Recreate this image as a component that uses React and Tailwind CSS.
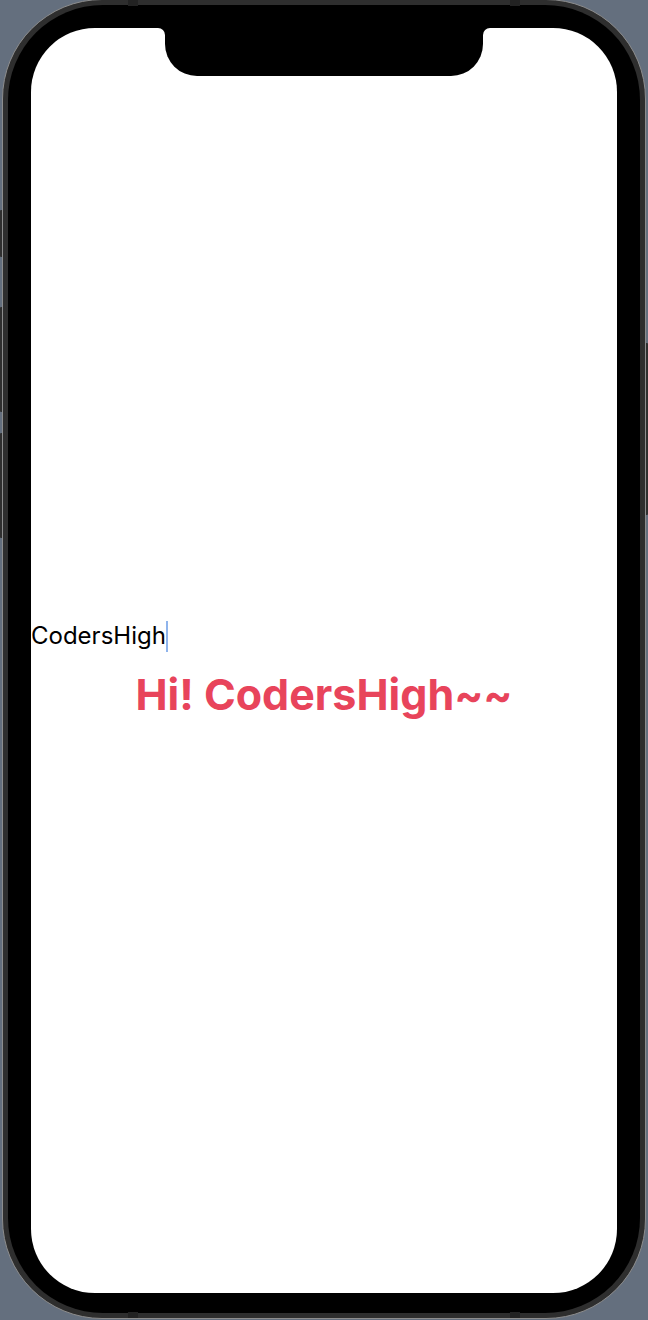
export default function App() {
  return (
    <div className="relative w-[648px] h-[1320px] overflow-hidden bg-[#646f7e]" style={{ fontFamily: 'Inter, "Noto Sans", sans-serif' }}>
      {/* side buttons */}
      <div className="absolute left-0 top-[210px] w-[3px] h-[47px] bg-[#2f2f2f] rounded-l-[1px]" />
      <div className="absolute left-0 top-[307px] w-[3px] h-[105px] bg-[#2f2f2f] rounded-l-[1px]" />
      <div className="absolute left-0 top-[433px] w-[3px] h-[105px] bg-[#2f2f2f] rounded-l-[1px]" />
      <div className="absolute right-0 top-[343px] w-[3px] h-[172px] bg-[#2f2f2f] rounded-r-[1px]" />

      <div className="relative ml-[2px] mt-[-1px] w-[644px] h-[1320px] rounded-[100px] border border-[#8d8d8d] bg-[#2e2e2e] p-[5px]">
        {/* antenna bands */}
        <div className="absolute top-0 left-[125px] w-[10px] h-[6px] bg-[#222]" />
        <div className="absolute top-0 left-[507px] w-[10px] h-[6px] bg-[#222]" />
        <div className="absolute bottom-0 left-[125px] w-[10px] h-[6px] bg-[#222]" />
        <div className="absolute bottom-0 left-[507px] w-[10px] h-[6px] bg-[#222]" />

        <div className="h-full w-full rounded-[95px] bg-black pt-[23px] px-[23px] pb-[20px]">
          <div className="relative h-full w-full rounded-[64px] bg-white overflow-hidden">
            {/* notch */}
            <div className="absolute top-0 inset-x-0 flex justify-center">
              <div className="w-[7px] h-[7px] bg-black">
                <div className="w-full h-full bg-white rounded-tr-[7px]" />
              </div>
              <div className="w-[318px] h-[48px] bg-black rounded-b-[32px]" />
              <div className="w-[7px] h-[7px] bg-black">
                <div className="w-full h-full bg-white rounded-tl-[7px]" />
              </div>
            </div>

            <div className="flex flex-col pt-[592px]">
              <div className="flex items-center h-[32px]">
                <span className="text-[24px] leading-[32px] text-black">CodersHigh</span>
                <span className="w-[2px] h-[31px] bg-[#8fb4ec]" />
              </div>
              <div className="mt-[18px] text-center text-[43px] leading-[48px] font-bold text-[#e8445b]">
                Hi! CodersHigh~~
              </div>
            </div>
          </div>
        </div>
      </div>
    </div>
  );
}
